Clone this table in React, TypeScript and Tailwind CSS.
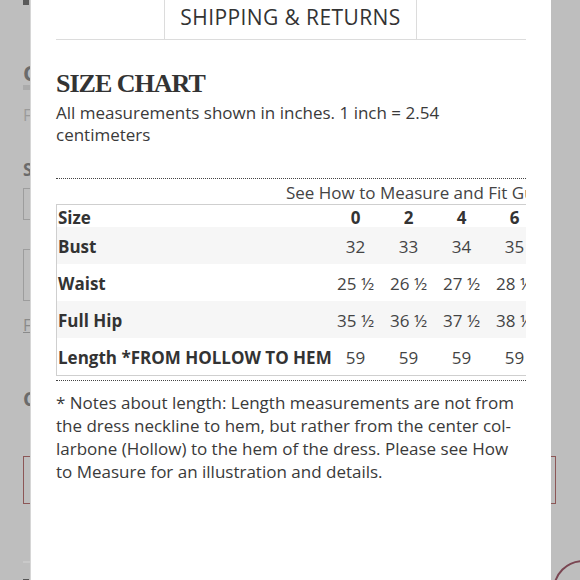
import React from 'react'

const SIZES = ['0', '2', '4', '6', '8', '10']

const ROWS: { label: string; values: string[]; shaded: boolean }[] = [
  { label: 'Bust', values: ['32', '33', '34', '35', '36', '37'], shaded: true },
  { label: 'Waist', values: ['25 ½', '26 ½', '27 ½', '28 ½', '29 ½', '30 ½'], shaded: false },
  { label: 'Full Hip', values: ['35 ½', '36 ½', '37 ½', '38 ½', '39 ½', '40 ½'], shaded: true },
  { label: 'Length *FROM HOLLOW TO HEM', values: ['59', '59', '59', '59', '59', '59'], shaded: false },
]

// Page behind the overlay: only the thin strips at the edges show
function BackdropPage() {
  return (
    <div className="flex flex-col pl-[23px] pr-[24px] text-[#6b6b6b]">
      <div className="h-[5px] w-[6px] bg-[#5a5a5a]" />
      <div className="mt-[56px] text-[22px] font-bold leading-[22px]">C</div>
      <div className="mt-[2px] h-[5px] w-[20px] bg-[#ababab]" />
      <div className="mt-[17px] text-[16px] leading-[16px] text-[#9a9a9a]">F</div>
      <div className="mt-[38px] text-[17px] font-bold leading-[17px]">S</div>
      <div className="mt-[10px] h-[32px] w-[60px] border border-[#9d9d9d]" />
      <div className="mt-[29px] h-[52px] w-[60px] border border-[#9d9d9d]" />
      <div className="mt-[15px] text-[16px] leading-[18px] text-[#8a8a8a] underline">F</div>
      <div className="mt-[55px] text-[20px] font-bold leading-[20px]">C</div>
      <div className="mt-[47px] h-[48px] border border-[#8c5656]" />
      <div className="mt-[57px] h-[2px] w-[20px] bg-[#c9c9c9]" />
      <div className="mt-[16px] h-[10px] w-[6px] bg-[#555]" />
    </div>
  )
}

function SizeTable() {
  return (
    <div className="overflow-hidden">
      <div className="pl-[230px] pt-[3px] whitespace-nowrap text-[17px] leading-[22px] text-[#444]">
        See How to Measure and Fit Guide
      </div>
      <div className="w-max border-y border-l border-[#cfcfcf]">
        <div className="grid grid-cols-[272px_repeat(6,53px)] h-[22px] items-center font-bold text-[17px] text-[#333]">
          <div className="pl-[1px]">Size</div>
          {SIZES.map(s => (
            <div key={s} className="text-center">{s}</div>
          ))}
        </div>
        {ROWS.map(row => (
          <div
            key={row.label}
            className={`grid grid-cols-[272px_repeat(6,53px)] h-[37px] items-center text-[17px] ${row.shaded ? 'bg-[#f6f6f6]' : 'bg-white'}`}
          >
            <div className="pl-[1px] pt-[3px] font-bold text-[#333] whitespace-nowrap">{row.label}</div>
            {row.values.map((v, i) => (
              <div key={i} className="pt-[3px] text-center text-[#444] whitespace-nowrap">{v}</div>
            ))}
          </div>
        ))}
      </div>
    </div>
  )
}

export default function App() {
  return (
    <div className="relative h-[580px] w-[580px] overflow-hidden bg-[#bebebe]" style={{ fontFamily: '"Open Sans", "Liberation Sans", sans-serif' }}>
      <BackdropPage />

      {/* floating button peeking out bottom right */}
      <div className="absolute left-[553px] top-[560px] h-[60px] w-[60px] rounded-full border-2 border-[#7a4652]" />

      {/* ── Modal ─────────────────────────────────────────────── */}
      <div className="absolute left-[30px] top-0 h-[580px] w-[521px] border-l border-[#d6d6d6] bg-white px-[25px] text-[#333]">

        {/* Tabs */}
        <div className="flex h-[40px] border-b border-[#dcdcdc]">
          <div className="w-[108px]" />
          <div className="flex w-[253px] items-center justify-center border-x border-[#dcdcdc] pb-[3px] text-[21px] tracking-[0.4px] text-[#333]">
            SHIPPING &amp; RETURNS
          </div>
        </div>

        {/* Heading */}
        <h2
          className="mt-[31px] text-[26px] font-bold leading-[26px] tracking-[-1px] text-[#333]"
          style={{ fontFamily: '"Liberation Serif", "DejaVu Serif", serif' }}
        >
          SIZE CHART
        </h2>
        <p className="mt-[5px] whitespace-nowrap text-[17px] leading-[22px] text-[#3a3a3a]">
          All measurements shown in inches. 1 inch = 2.54
          <br />
          centimeters
        </p>

        <div className="mt-[32px] border-t border-dotted border-[#444]" />

        <SizeTable />

        <div className="mt-[4px] border-t border-dotted border-[#444]" />

        {/* Notes */}
        <p className="mt-[10px] whitespace-nowrap text-[17px] leading-[23px] text-[#3a3a3a]">
          * Notes about length: Length measurements are not from
          <br />
          the dress neckline to hem, but rather from the center col-
          <br />
          larbone (Hollow) to the hem of the dress. Please see How
          <br />
          to Measure for an illustration and details.
        </p>
      </div>
    </div>
  )
}
